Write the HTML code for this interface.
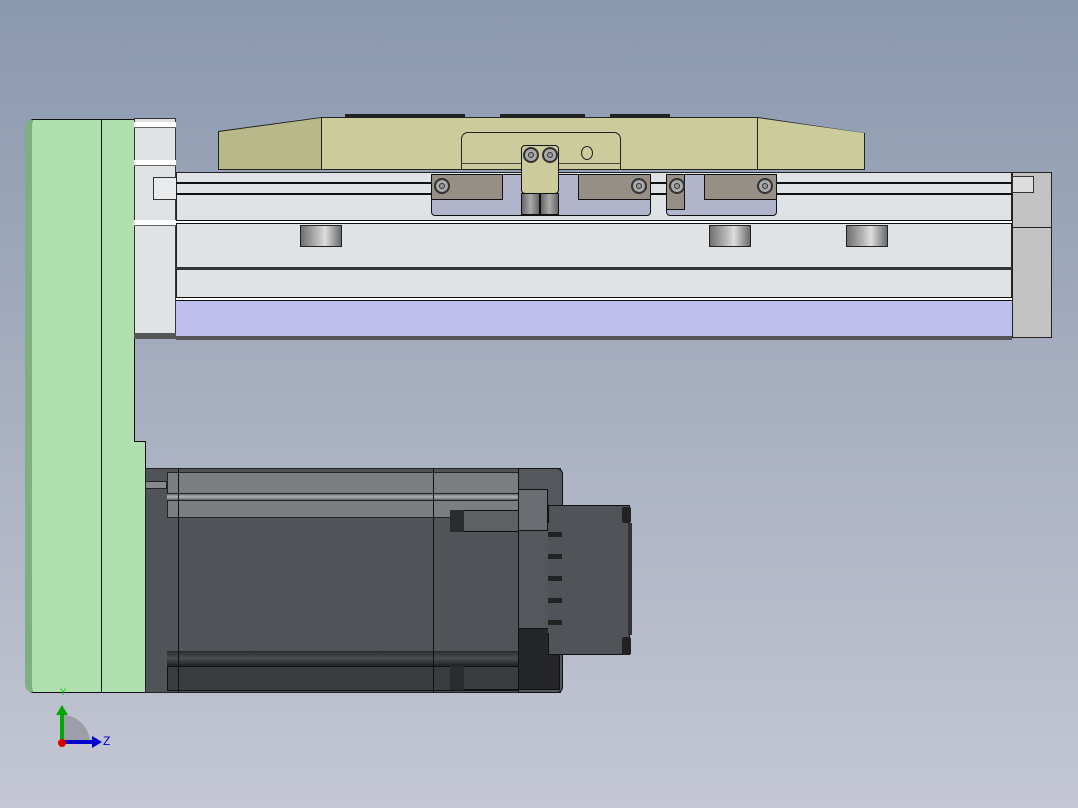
<!DOCTYPE html>
<html><head><style>
*{margin:0;padding:0;box-sizing:border-box}
body{width:1078px;height:808px;overflow:hidden;position:relative;background:linear-gradient(#8a98ae 0%,#a5adbf 45%,#c4c7d3 100%);font-family:"Liberation Sans",sans-serif}
div{position:absolute}
.b{border:1px solid #111}
.cyl{background:linear-gradient(90deg,#6f6f6f,#c9c9c9 50%,#dedede 60%,#6a6a6a);border:1px solid #222}
.scr{width:16px;height:16px;border-radius:50%;border:2px solid #333;background:#999;box-shadow:inset 0 0 0 3px #aaa,inset 0 0 0 4px #333}
</style></head><body>
<!-- green plate -->
<div style="left:25px;top:119px;width:110px;height:574px;background:#b0e0b0;border:1px solid #111;border-radius:9px 0 0 9px;border-left:7px solid #7fb07f"></div>
<div style="left:101px;top:119px;width:1px;height:574px;background:#111"></div>
<div style="left:134px;top:441px;width:12px;height:252px;background:#b0e0b0;border:1px solid #111;border-left:none"></div>
<!-- left gray block -->
<div style="left:134px;top:118px;width:42px;height:220px;background:#e0e3e6;border:1px solid #333"></div>
<div style="left:134px;top:122px;width:42px;height:6px;background:#fff;border-bottom:1px solid #666"></div>
<div style="left:134px;top:160px;width:42px;height:6px;background:#fff;border-bottom:1px solid #666"></div>
<div style="left:134px;top:220px;width:42px;height:6px;background:#fff;border-bottom:1px solid #666"></div>
<div style="left:134px;top:333px;width:42px;height:6px;background:#555"></div>
<div style="left:153px;top:177px;width:24px;height:23px;background:#e8eaec;border:1px solid #333"></div>
<!-- rail -->
<div style="left:176px;top:172px;width:836px;height:168px;background:#e0e3e6;border:1px solid #222"></div>
<div style="left:176px;top:182px;width:836px;height:2px;background:#111"></div>
<div style="left:176px;top:193px;width:836px;height:2px;background:#111"></div>
<div style="left:176px;top:220px;width:836px;height:4px;border-top:1px solid #111;border-bottom:1px solid #111;background:#fff"></div>
<div style="left:176px;top:267px;width:836px;height:3px;background:#333"></div>
<div style="left:176px;top:297px;width:836px;height:4px;border-top:1px solid #111;border-bottom:1px solid #111;background:#fff"></div>
<div style="left:176px;top:301px;width:836px;height:35px;background:#c0c0ee"></div>
<div style="left:176px;top:336px;width:836px;height:4px;background:#555"></div>
<!-- right cap -->
<div style="left:1012px;top:172px;width:40px;height:166px;background:#c3c3c3;border:1px solid #222"></div>
<div style="left:1012px;top:227px;width:40px;height:1px;background:#222"></div>
<div style="left:1012px;top:176px;width:22px;height:17px;background:#ddd;border:1px solid #333"></div>
<!-- cylinders -->
<div class="cyl" style="left:300px;top:225px;width:42px;height:22px"></div>
<div class="cyl" style="left:709px;top:225px;width:42px;height:22px"></div>
<div class="cyl" style="left:846px;top:225px;width:42px;height:22px"></div>
<!-- carriage blocks -->
<div class="b" style="left:431px;top:174px;width:220px;height:42px;background:#b1b5cb;border-radius:4px"></div>
<div class="b" style="left:431px;top:174px;width:72px;height:26px;background:#958f86"></div>
<div class="b" style="left:578px;top:174px;width:73px;height:26px;background:#958f86"></div>
<div class="b" style="left:666px;top:174px;width:111px;height:42px;background:#b1b5cb;border-radius:4px"></div>
<div class="b" style="left:666px;top:174px;width:19px;height:36px;background:#958f86"></div>
<div class="b" style="left:704px;top:174px;width:73px;height:26px;background:#958f86"></div>
<div class="scr" style="left:434px;top:178px"></div>
<div class="scr" style="left:631px;top:178px"></div>
<div class="scr" style="left:669px;top:178px"></div>
<div class="scr" style="left:757px;top:178px"></div>
<!-- yellow carriage -->
<div style="left:218px;top:117px;width:647px;height:53px;background:#222;clip-path:polygon(0 14px,104px 0,540px 0,647px 16px,647px 53px,0 53px);"></div>
<div style="left:219px;top:118px;width:645px;height:51px;background:#cbcb9b;clip-path:polygon(0 14px,103px 0,539px 0,645px 15px,645px 51px,0 51px);"></div>
<div style="left:219px;top:118px;width:102px;height:51px;background:#b8b888;clip-path:polygon(0 14px,102px 0,102px 51px,0 51px)"></div>
<div style="left:321px;top:117px;width:1px;height:53px;background:#222"></div>
<div style="left:757px;top:117px;width:1px;height:53px;background:#222"></div>
<div style="left:345px;top:114px;width:120px;height:3px;background:#222"></div>
<div style="left:500px;top:114px;width:85px;height:3px;background:#222"></div>
<div style="left:610px;top:114px;width:60px;height:3px;background:#222"></div>
<div style="left:461px;top:132px;width:160px;height:38px;border:1px solid #222;border-bottom:none;border-radius:7px 7px 0 0"></div>
<div style="left:461px;top:163px;width:160px;height:1px;background:#444"></div>
<div style="left:581px;top:146px;width:12px;height:14px;border:1px solid #222;border-radius:50%"></div>
<div class="b" style="left:521px;top:145px;width:38px;height:49px;background:#cbcb9b;border-radius:4px"></div>
<div class="b" style="left:521px;top:193px;width:19px;height:22px;background:linear-gradient(90deg,#666,#aaa,#666)"></div>
<div class="b" style="left:540px;top:193px;width:19px;height:22px;background:linear-gradient(90deg,#666,#aaa,#666)"></div>
<div class="scr" style="left:523px;top:147px"></div>
<div class="scr" style="left:542px;top:147px"></div>
<!-- motor -->
<div style="left:145px;top:468px;width:416px;height:225px;background:#505458;border:1px solid #222"></div>
<div style="left:167px;top:472px;width:352px;height:46px;background:#7a7e80;border:1px solid #222"></div>
<div style="left:167px;top:493px;width:352px;height:8px;background:linear-gradient(#6a6e70,#b0b4b6,#5a5e60);border-top:1px solid #222;border-bottom:1px solid #222"></div>
<div style="left:145px;top:481px;width:22px;height:8px;background:#888;border:1px solid #222"></div>
<div style="left:167px;top:651px;width:352px;height:40px;background:#3a3d40;border:1px solid #111"></div>
<div style="left:167px;top:651px;width:352px;height:16px;background:linear-gradient(#2a2c2e,#4a4d50,#1d1f20);border-bottom:1px solid #111"></div>
<div style="left:178px;top:468px;width:1px;height:225px;background:#111"></div>
<div style="left:433px;top:468px;width:1px;height:225px;background:#111"></div>
<div style="left:450px;top:510px;width:70px;height:22px;border:1px solid #111;background:#5d6164"></div>
<div style="left:450px;top:510px;width:14px;height:22px;background:#2a2c2e"></div>
<div style="left:450px;top:666px;width:70px;height:24px;border:1px solid #111;background:#3a3d40"></div>
<div style="left:450px;top:666px;width:14px;height:24px;background:#2a2c2e"></div>
<div style="left:518px;top:468px;width:45px;height:225px;background:#54585c;border:1px solid #111;border-radius:0 6px 6px 0"></div>
<div style="left:518px;top:489px;width:30px;height:42px;background:#6a6e72;border:1px solid #111"></div>
<div style="left:518px;top:628px;width:42px;height:62px;background:#242628;border:1px solid #111"></div>
<div style="left:548px;top:505px;width:82px;height:150px;background:#505458;border:1px solid #111"></div>
<div style="left:548px;top:523px;width:14px;height:110px;background:repeating-linear-gradient(#505458 0 9px,#222 9px 14px,#505458 14px 22px)"></div>
<div style="left:622px;top:507px;width:9px;height:16px;background:#222;border-radius:2px"></div>
<div style="left:622px;top:637px;width:9px;height:18px;background:#222;border-radius:2px"></div>
<div style="left:628px;top:523px;width:4px;height:112px;background:#333"></div>
<!-- axis triad -->
<svg style="position:absolute;left:50px;top:685px" width="70" height="70">
<path d="M12 58 L12 30 A28 28 0 0 1 40 58 Z" fill="#9c9fa8"/>
<line x1="12" y1="57" x2="12" y2="28" stroke="#0a0" stroke-width="4"/>
<polygon points="6,30 18,30 12,20" fill="#0a0"/>
<line x1="12" y1="57" x2="44" y2="57" stroke="#00c" stroke-width="4"/>
<polygon points="42,51 42,63 52,57" fill="#00c"/>
<circle cx="12" cy="58" r="4" fill="#d00"/>
<text x="10" y="10" fill="#0c0" font-size="9" font-family="Liberation Sans">Y</text>
<text x="53" y="60" fill="#00c" font-size="12" font-family="Liberation Sans">Z</text>
</svg>
</body></html>
